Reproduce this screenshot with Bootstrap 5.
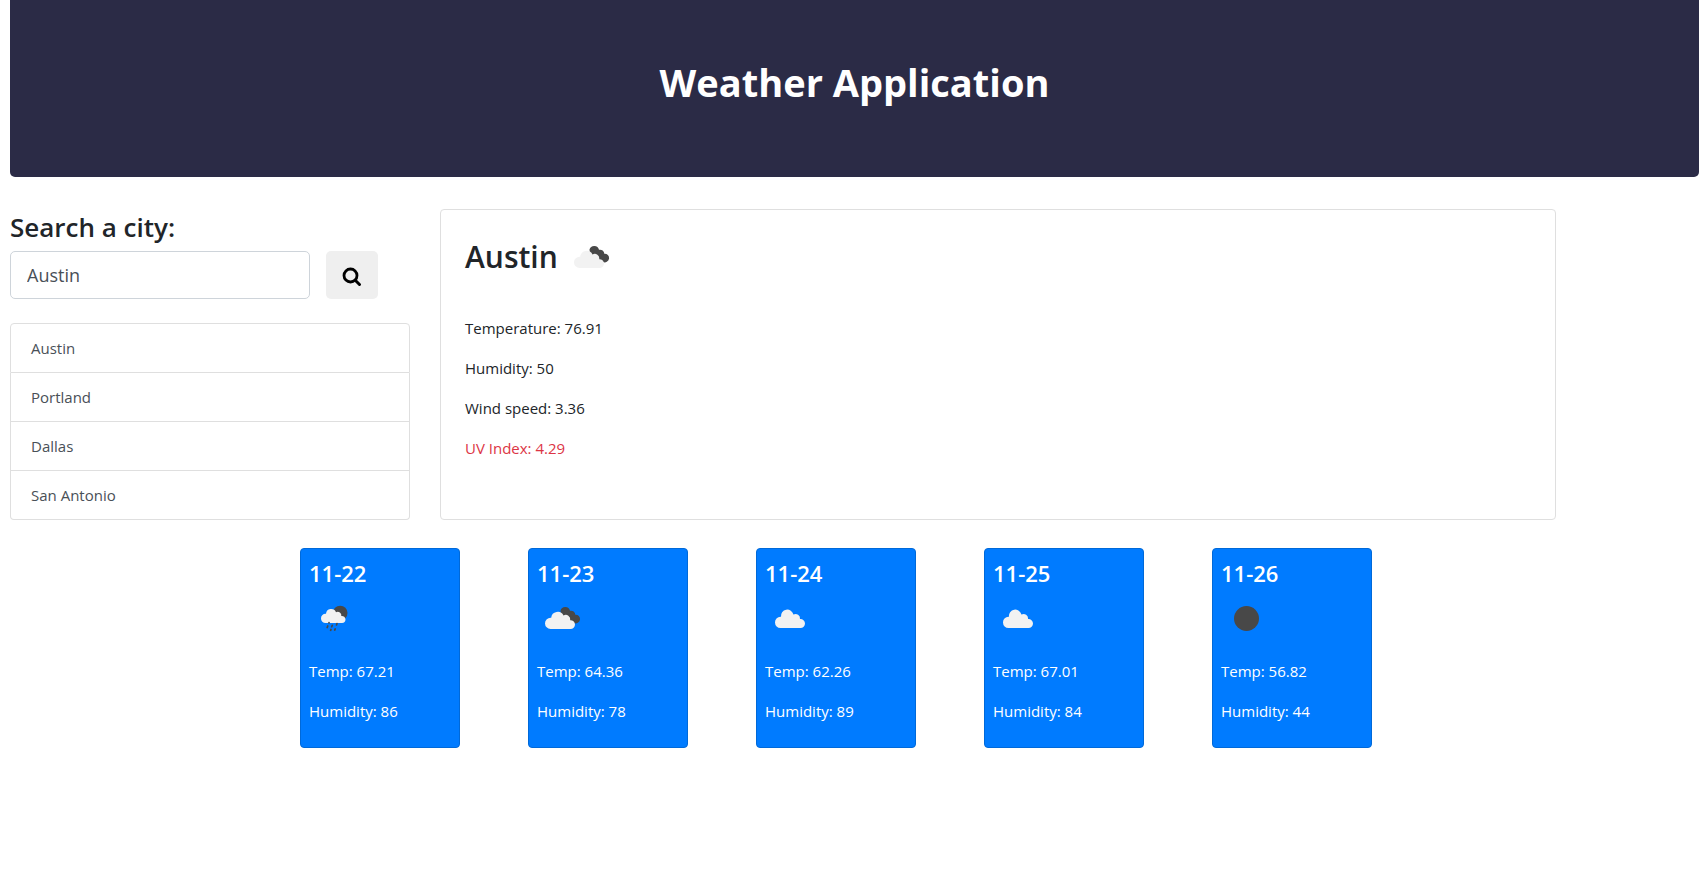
<!DOCTYPE html>
<html lang="en">
<head>
<meta charset="utf-8">
<meta name="viewport" content="width=device-width, initial-scale=1">
<title>Weather Application</title>
<link href="https://cdn.jsdelivr.net/npm/bootstrap@5.3.0/dist/css/bootstrap.min.css" rel="stylesheet">
<style>
  body { font-family: "Open Sans", "Noto Sans", sans-serif; font-size: 15px; line-height: 24px; color: #212529; }
  .page-wrap { padding: 0 9px 24px 10px; }
  .hero { background: #2b2b46; border-radius: 0 0 5px 5px; padding: 54px 16px 67px; margin-bottom: 32px; }
  .hero-title { font-size: 38px; line-height: 56px; font-weight: 700; }
  .top-row { gap: 30px; padding-right: 143px; }
  .sidebar { width: 400px; max-width: 100%; }
  .search-label { font-size: 26px; line-height: 36px; font-weight: 600; margin-bottom: 6px; }
  .search-box { width: 300px; height: 48px; font-size: 18px; padding: 8px 16px; border-color: #ced4da; border-radius: 5px; color: #495057; }
  .search-btn { width: 52px; height: 48px; background: #efefef; border-radius: 5px; padding: 0; }
  .cities { --bs-list-group-border-color: #dfdfdf; --bs-list-group-border-radius: 4px; }
  .cities .list-group-item { padding: 12px 20px; color: #495057; }
  .current { border: 1px solid #dfdfdf; border-radius: 4px; padding: 22px 24px; min-width: 280px; }
  .city-name { font-size: 30px; line-height: 50px; font-weight: 600; margin-bottom: 34px; }
  .uv { color: #dc3545; }
  .forecast { gap: 28px 68px; padding-left: 290px; margin-top: 28px; }
  .day { width: 160px; min-height: 200px; background: #007bff; border: 1px solid #0069d9; border-radius: 4px; padding: 8px; }
  .day-date { font-size: 22px; line-height: 32px; font-weight: 600; margin-bottom: 4px; }
  @media (max-width: 1400px) { .forecast { padding-left: 0; } .top-row { padding-right: 0; } }
</style>
</head>
<body>
<svg class="d-none" aria-hidden="true">
  <symbol id="ic-cloud" viewBox="0 0 50 50">
    <path fill="#f2f2f2" d="M15.500 35A5.500 5.500 0 0 1 10 29.500A5.500 5.500 0 0 1 16 23.800A6.300 6.300 0 0 1 28.400 21.600A4.400 4.400 0 0 1 35 26A4.500 4.500 0 0 1 40 30.500A4.500 4.500 0 0 1 35.500 35Z"/>
  </symbol>
  <symbol id="ic-clouds" viewBox="0 0 50 50">
    <path fill="#484848" d="M23.500 17.500A4.900 4.900 0 0 1 33 17.800A4.200 4.200 0 0 1 38.300 21.800A4.300 4.300 0 1 1 37 30L32 27L24 22Z"/>
    <path fill="#f2f2f2" d="M13.500 36A5.600 5.600 0 0 1 8 30.500A5.600 5.600 0 0 1 14.200 24.700A6.500 6.500 0 0 1 26.500 22.500A4.500 4.500 0 0 1 33.200 27.200A4.500 4.500 0 0 1 38 31.500A4.500 4.500 0 0 1 33.500 36Z"/>
  </symbol>
  <symbol id="ic-rain" viewBox="0 0 50 50">
    <circle cx="31.200" cy="20" r="7.300" fill="#484848"/>
    <path fill="#f2f2f2" d="M16.500 30A4.500 4.500 0 0 1 12 25.500A4.500 4.500 0 0 1 17 20.800A5.200 5.200 0 0 1 27 19.200A3.600 3.600 0 0 1 32.300 23A3.600 3.600 0 0 1 36.500 26.500A3.600 3.600 0 0 1 33 30Z"/>
    <path stroke="#484848" stroke-width="1.700" stroke-linecap="round" d="M20 29.500v.3M18.800 33l-.6 1.500M23.300 32.300l-.6 1.500M28 30.500l-.5 1.500M22 36.500l-.4.800M26.200 36l-.5 1"/>
  </symbol>
  <symbol id="ic-clear" viewBox="0 0 50 50"><circle cx="25.500" cy="25.500" r="12.500" fill="#484848"/></symbol>
</svg>

<div class="container-fluid page-wrap">
  <header class="hero text-center text-white">
    <h1 class="hero-title mb-0">Weather Application</h1>
  </header>

  <main>
    <div class="top-row d-flex flex-wrap flex-lg-nowrap">
      <div class="sidebar flex-shrink-0">
        <label class="search-label d-block" for="city">Search a city:</label>
        <form class="d-flex gap-3 mb-4" onsubmit="return false">
          <input class="form-control search-box" id="city" type="text" value="Austin">
          <button class="btn search-btn flex-shrink-0" type="submit" aria-label="Search">
            <svg width="20" height="20" viewBox="0 0 20 20" fill="none" stroke="#000"><circle cx="8.500" cy="8.500" r="6.500" stroke-width="2.800"/><path d="M13.500 13.500l4 4" stroke-width="3" stroke-linecap="round"/></svg>
          </button>
        </form>
        <ul class="list-group cities">
          <li class="list-group-item">Austin</li>
          <li class="list-group-item">Portland</li>
          <li class="list-group-item">Dallas</li>
          <li class="list-group-item">San Antonio</li>
        </ul>
      </div>

      <section class="current flex-grow-1">
        <h2 class="city-name d-flex gap-2">Austin <svg width="50" height="50" role="img" aria-label="Broken clouds"><use href="#ic-clouds"/></svg></h2>
        <p>Temperature: 76.91</p>
        <p>Humidity: 50</p>
        <p>Wind speed: 3.36</p>
        <p class="uv">UV Index: 4.29</p>
      </section>
    </div>

    <div class="forecast d-flex flex-wrap">
      <article class="day text-white">
        <h3 class="day-date">11-22</h3>
        <svg class="d-block mb-3" width="50" height="50" role="img" aria-label="Rain"><use href="#ic-rain"/></svg>
        <p>Temp: 67.21</p>
        <p>Humidity: 86</p>
      </article>
      <article class="day text-white">
        <h3 class="day-date">11-23</h3>
        <svg class="d-block mb-3" width="50" height="50" role="img" aria-label="Broken clouds"><use href="#ic-clouds"/></svg>
        <p>Temp: 64.36</p>
        <p>Humidity: 78</p>
      </article>
      <article class="day text-white">
        <h3 class="day-date">11-24</h3>
        <svg class="d-block mb-3" width="50" height="50" role="img" aria-label="Cloudy"><use href="#ic-cloud"/></svg>
        <p>Temp: 62.26</p>
        <p>Humidity: 89</p>
      </article>
      <article class="day text-white">
        <h3 class="day-date">11-25</h3>
        <svg class="d-block mb-3" width="50" height="50" role="img" aria-label="Cloudy"><use href="#ic-cloud"/></svg>
        <p>Temp: 67.01</p>
        <p>Humidity: 84</p>
      </article>
      <article class="day text-white">
        <h3 class="day-date">11-26</h3>
        <svg class="d-block mb-3" width="50" height="50" role="img" aria-label="Clear"><use href="#ic-clear"/></svg>
        <p>Temp: 56.82</p>
        <p>Humidity: 44</p>
      </article>
    </div>
  </main>
</div>
<script src="https://cdn.jsdelivr.net/npm/bootstrap@5.3.0/dist/js/bootstrap.bundle.min.js"></script>
</body>
</html>
